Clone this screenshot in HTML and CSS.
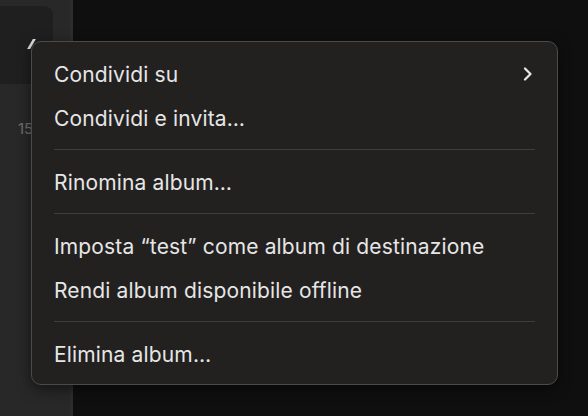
FILE: index.html
```html
<!DOCTYPE html>
<html lang="it">
<head>
<meta charset="utf-8">
<link rel="stylesheet" href="styles.css">
</head>
<body>
<div class="app">
  <aside class="side">
    <div class="card"></div>
    <div class="date">15</div>
  </aside>
  <main class="main"></main>
  <span class="tick"></span>
  <div class="menu">
    <div class="item"><span>Condividi su</span>
      <svg class="chev" width="10" height="14" viewBox="0 0 10 14"><path d="M2 1.5 L7.5 7 L2 12.5" fill="none" stroke="#e8e8e8" stroke-width="2.2" stroke-linecap="round" stroke-linejoin="round"/></svg>
    </div>
    <div class="item"><span>Condividi e invita…</span></div>
    <div class="sep"></div>
    <div class="item"><span>Rinomina album…</span></div>
    <div class="sep"></div>
    <div class="item"><span>Imposta “test” come album di destinazione</span></div>
    <div class="item"><span>Rendi album disponibile offline</span></div>
    <div class="sep"></div>
    <div class="item"><span>Elimina album…</span></div>
  </div>
</div>
</body>
</html>
```

FILE: styles.css
```css
* { box-sizing: border-box; }
html, body { margin: 0; padding: 0; }
body {
  width: 588px;
  height: 416px;
  overflow: hidden;
  background: #0f0f0f;
  font-family: Inter, "Noto Sans", sans-serif;
}
.app {
  position: relative;
  width: 588px;
  height: 416px;
  display: flex;
}
.side {
  width: 73px;
  height: 100%;
  background: #282828;
  border-right: 3px solid #2d2d2d;
  padding-top: 6px;
}
.card {
  width: 53px;
  height: 78px;
  background: #1f1f1f;
  border-radius: 0 9px 9px 0;
}
.date {
  margin-top: 35px;
  padding-left: 18px;
  color: #6f6f6f;
  font-size: 15px;
}
.main { flex: 1; background: #0f0f0f; }
.tick {
  position: absolute;
  left: 30px;
  top: 39px;
  width: 3px;
  height: 10px;
  background: #e0e0e0;
  transform: skewX(-30deg);
}
.menu {
  position: absolute;
  left: 31px;
  top: 41px;
  width: 527px;
  background: #222120;
  border: 1px solid #4a4a4a;
  border-radius: 10px;
  padding: 10px 22px 8px 22px;
  box-shadow: 0 4px 14px rgba(0,0,0,0.5);
}
.item {
  height: 44px;
  display: flex;
  align-items: center;
  justify-content: space-between;
  color: #e6e6e6;
  font-size: 21px;
  letter-spacing: 0.15px;
}
.chev { margin-right: 2px; }
.sep {
  height: 1px;
  background: #3d3d3d;
  margin: 9px 0 10px 0;
}
```
